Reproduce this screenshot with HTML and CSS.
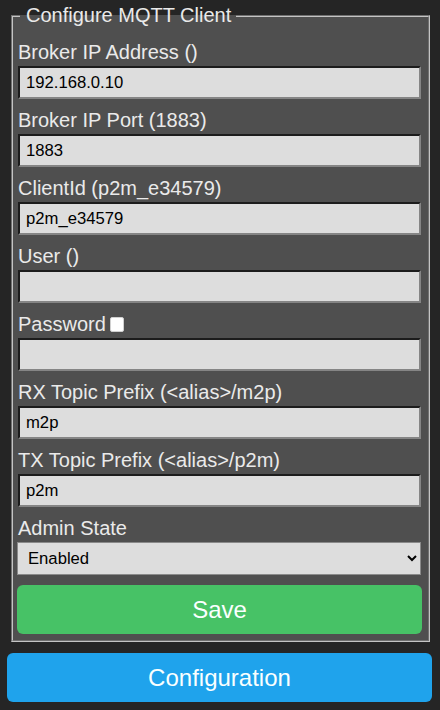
FILE: index.html
```html
<!DOCTYPE html>
<html>
<head>
<meta charset="utf-8">
<link rel="stylesheet" href="styles.css">
</head>
<body>
<div class="wrap">
  <fieldset class="box">
    <legend class="title">Configure MQTT Client</legend>
    <form class="fields">
      <div class="field">
        <label class="lbl">Broker IP Address ()</label>
        <input class="txt" type="text" value="192.168.0.10">
      </div>
      <div class="field">
        <label class="lbl">Broker IP Port (1883)</label>
        <input class="txt" type="text" value="1883">
      </div>
      <div class="field">
        <label class="lbl">ClientId (p2m_e34579)</label>
        <input class="txt" type="text" value="p2m_e34579">
      </div>
      <div class="field">
        <label class="lbl">User ()</label>
        <input class="txt" type="text" value="">
      </div>
      <div class="field">
        <label class="lbl">Password<input class="chk" type="checkbox"></label>
        <input class="txt" type="password" value="">
      </div>
      <div class="field">
        <label class="lbl">RX Topic Prefix (&lt;alias&gt;/m2p)</label>
        <input class="txt" type="text" value="m2p">
      </div>
      <div class="field">
        <label class="lbl">TX Topic Prefix (&lt;alias&gt;/p2m)</label>
        <input class="txt" type="text" value="p2m">
      </div>
      <div class="field">
        <label class="lbl">Admin State</label>
        <select class="sel">
          <option>Enabled</option>
          <option>Disabled</option>
        </select>
      </div>
      <button type="button" class="btn btn-save">Save</button>
    </form>
  </fieldset>
  <button type="button" class="btn btn-conf">Configuration</button>
</div>
</body>
</html>
```
FILE: styles.css
```css
html, body {
  margin: 0;
  padding: 0;
  background: #252525;
}
body {
  font-family: "Liberation Sans", Arial, sans-serif;
  color: #eaeaea;
}
.wrap {
  width: 425px;
  margin-left: 7px;
  padding-top: 4px;
  display: flex;
  flex-direction: column;
  gap: 11px;
}
.box {
  margin: 0 2px 0 4px;
  padding: 0 7px 6px 5px;
  border: 2px groove #c4c4c4;
  background: #4f4f4f;
  min-width: 0;
}
.title {
  font-size: 20px;
  line-height: 23px;
  margin-left: 2px;
  padding: 0 5px 0 6px;
  color: #eaeaea;
}
.fields {
  display: flex;
  flex-direction: column;
  gap: 10px;
  padding-top: 14px;
  margin: 0;
}
.field {
  display: flex;
  flex-direction: column;
  gap: 2px;
}
.lbl {
  font-size: 20px;
  line-height: 23px;
  display: flex;
  align-items: center;
}
.chk {
  appearance: none;
  -webkit-appearance: none;
  width: 14px;
  height: 15px;
  margin: 0 0 0 4px;
  background: #ffffff;
  border: 1px solid #d0d0d0;
  border-radius: 2px;
  box-sizing: border-box;
}
.txt {
  box-sizing: border-box;
  width: 100%;
  height: 33px;
  margin: 0;
  padding: 0 6px;
  font-family: "Liberation Sans", Arial, sans-serif;
  font-size: 16.67px;
  color: #000;
  background: #dddddd;
  border-style: solid;
  border-width: 2px;
  border-color: #1c1c1c #858585 #858585 #1c1c1c;
  outline: none;
}
.sel {
  box-sizing: border-box;
  width: calc(100% + 1px);
  height: 33px;
  margin: 0 0 0 -1px;
  padding: 0 3px 0 6px;
  font-family: "Liberation Sans", Arial, sans-serif;
  font-size: 16.67px;
  color: #000;
  background: #dddddd;
  border: 1px solid #8a8a8a;
  border-radius: 0;
}
.btn {
  display: block;
  width: 100%;
  height: 49px;
  border: 0;
  border-radius: 6px;
  font-family: "Liberation Sans", Arial, sans-serif;
  font-size: 24px;
  color: #faffff;
  padding: 0;
  cursor: pointer;
}
.btn-save {
  background: #47c266;
  margin: 0 0 0 -1px;
  width: calc(100% + 2px);
}
.btn-conf {
  background: #1fa3ec;
}
```
